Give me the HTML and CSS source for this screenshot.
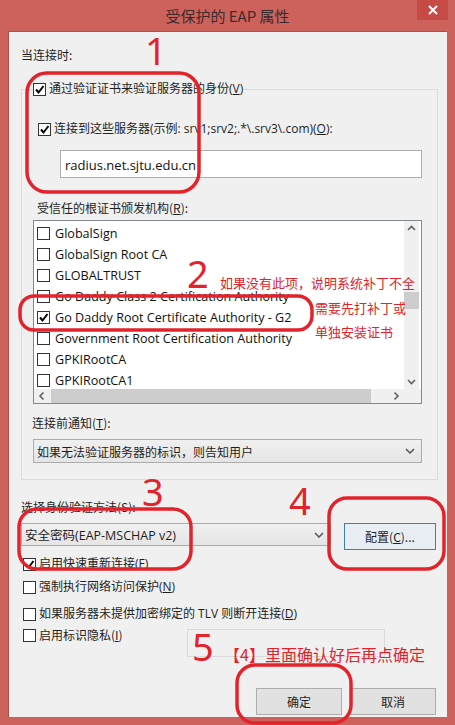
FILE: index.html
```html
<!DOCTYPE html>
<html lang="zh-CN">
<head>
    <meta charset="UTF-8">
    <title>受保护的 EAP 属性</title>
    <link rel="stylesheet" href="styles.css">
</head>
<body>
    <div class="window">
        <div class="titlebar">
            <div class="title">受保护的 EAP 属性</div>
            <div class="close">
                <svg width="10" height="10" viewBox="0 0 10 10"><path d="M1 1L9 9M9 1L1 9" stroke="#fff" stroke-width="2"/></svg>
            </div>
        </div>

        <div class="client">
            <div class="label top-label">当连接时:</div>

            <fieldset class="group">
                <legend class="check">
                    <span class="box on"><svg viewBox="0 0 11 11"><path d="M2 5.5L4.5 8.5L9.5 2" fill="none" stroke="#000" stroke-width="2"/></svg></span>
                    <span>通过验证证书来验证服务器的身份(<u>V</u>)</span>
                </legend>

                <div class="check servers">
                    <span class="box on"><svg viewBox="0 0 11 11"><path d="M2 5.5L4.5 8.5L9.5 2" fill="none" stroke="#000" stroke-width="2"/></svg></span>
                    <span>连接到这些服务器(示例: srv1;srv2;.*\.srv3\.com)(<u>O</u>):</span>
                </div>
                <div class="textbox server-input">radius.net.sjtu.edu.cn</div>

                <div class="label ca-label">受信任的根证书颁发机构(<u>R</u>):</div>
                <div class="listbox">
                    <div class="list-main">
                        <div class="list-items">
                            <div class="item"><span class="box"></span>GlobalSign</div>
                            <div class="item"><span class="box"></span>GlobalSign Root CA</div>
                            <div class="item"><span class="box"></span>GLOBALTRUST</div>
                            <div class="item"><span class="box"></span>Go Daddy Class 2 Certification Authority</div>
                            <div class="item"><span class="box on"><svg viewBox="0 0 11 11"><path d="M2 5.5L4.5 8.5L9.5 2" fill="none" stroke="#000" stroke-width="2"/></svg></span>Go Daddy Root Certificate Authority - G2</div>
                            <div class="item"><span class="box"></span>Government Root Certification Authority</div>
                            <div class="item"><span class="box"></span>GPKIRootCA</div>
                            <div class="item"><span class="box"></span>GPKIRootCA1</div>
                        </div>
                        <div class="vscroll">
                            <svg class="arrow" width="15" height="15" viewBox="0 0 15 15"><path d="M4 9L7.5 5.5L11 9" fill="none" stroke="#606060" stroke-width="1.6"/></svg>
                            <div class="vtrack"><div class="vthumb"></div></div>
                            <svg class="arrow" width="15" height="15" viewBox="0 0 15 15"><path d="M4 6L7.5 9.5L11 6" fill="none" stroke="#606060" stroke-width="1.6"/></svg>
                        </div>
                    </div>
                    <div class="hscroll">
                        <svg class="arrow" width="17" height="14" viewBox="0 0 17 14"><path d="M9.5 3.5L6 7L9.5 10.5" fill="none" stroke="#606060" stroke-width="1.6"/></svg>
                        <div class="htrack"><div class="hthumb"></div></div>
                        <svg class="arrow" width="17" height="14" viewBox="0 0 17 14"><path d="M7.5 3.5L11 7L7.5 10.5" fill="none" stroke="#606060" stroke-width="1.6"/></svg>
                        <div class="corner"></div>
                    </div>
                </div>

                <div class="label notify-label">连接前通知(<u>T</u>):</div>
                <div class="select notify">
                    <span>如果无法验证服务器的标识，则告知用户</span>
                    <svg width="10" height="6" viewBox="0 0 10 6"><path d="M1 1L5 5L9 1" fill="none" stroke="#555" stroke-width="1.5"/></svg>
                </div>
            </fieldset>

            <div class="label method-label">选择身份验证方法(S):</div>
            <div class="method-row">
                <div class="select method">
                    <span>安全密码(EAP-MSCHAP v2)</span>
                    <svg width="10" height="6" viewBox="0 0 10 6"><path d="M1 1L5 5L9 1" fill="none" stroke="#555" stroke-width="1.5"/></svg>
                </div>
                <div class="button config">配置(<u>C</u>)...</div>
            </div>

            <div class="options">
                <div class="check">
                    <span class="box on"><svg viewBox="0 0 11 11"><path d="M2 5.5L4.5 8.5L9.5 2" fill="none" stroke="#000" stroke-width="2"/></svg></span>
                    <span>启用快速重新连接(<u>F</u>)</span>
                </div>
                <div class="check">
                    <span class="box"></span>
                    <span>强制执行网络访问保护(<u>N</u>)</span>
                </div>
                <div class="check">
                    <span class="box"></span>
                    <span>如果服务器未提供加密绑定的 TLV 则断开连接(<u>D</u>)</span>
                </div>
                <div class="check privacy">
                    <span class="box"></span>
                    <span>启用标识隐私(<u>I</u>)</span>
                    <div class="ghost-input"></div>
                </div>
            </div>

            <div class="footer">
                <div class="button">确定</div>
                <div class="button">取消</div>
            </div>
        </div>

        <!-- red marks drawn over the dialog -->
        <div class="marks">
            <svg class="rings" width="455" height="725" viewBox="0 0 455 725">
                <rect x="27" y="73" width="172" height="119" rx="20" />
                <rect x="20" y="296" width="292" height="34" rx="14" />
                <rect x="19" y="509" width="172" height="60" rx="18" />
                <rect x="329" y="498" width="115" height="71" rx="18" />
                <rect x="237" y="665" width="114" height="58" rx="18" />
            </svg>
            <div class="num n1">1</div>
            <div class="num n2">2</div>
            <div class="num n3">3</div>
            <div class="num n4">4</div>
            <div class="num n5">5</div>
            <div class="note note2">
                <div>如果没有此项，说明系统补丁不全</div>
                <div class="indent">需要先打补丁或</div>
                <div class="indent">单独安装证书</div>
            </div>
            <div class="note note5">【4】里面确认好后再点确定</div>
        </div>
    </div>
</body>
</html>
```

FILE: styles.css
```css
* {
    box-sizing: border-box;
    margin: 0;
    padding: 0;
}

body {
    font-family: "Open Sans", "Noto Sans CJK SC", sans-serif;
    font-size: 12px;
    color: #1e1e1e;
    background: #cd625c;
}

.window {
    position: relative;
    width: 455px;
    height: 725px;
    background: #cd625c;
    overflow: hidden;
}

.titlebar {
    display: flex;
    height: 31px;
}

.title {
    flex: 1;
    padding: 5px 0 0 38px;
    text-align: center;
    font-family: "Noto Sans CJK SC", sans-serif;
    font-size: 15px;
    color: #3b2a29;
}

.close {
    display: flex;
    align-items: center;
    justify-content: center;
    width: 31px;
    height: 20px;
    margin-right: 7px;
    background: #c64a46;
}

.client {
    height: 686px;
    margin: 0 8px;
    padding: 15px 0 0 12px;
    background: #f0f0f0;
    border: 1px solid #b04f4a;
    border-width: 1px 0 0 1px;
}

.label {
    font-family: "Noto Sans CJK SC", sans-serif;
    line-height: 16px;
}

.top-label {
    margin-bottom: 18px;
}

u {
    text-decoration: underline;
    text-underline-offset: 1px;
}

.check {
    display: flex;
    align-items: center;
    gap: 3px;
    line-height: 16px;
    font-family: "Noto Sans CJK SC", sans-serif;
}

.check span:last-child {
    font-family: "Open Sans", "Noto Sans CJK SC", sans-serif;
}

.box {
    display: inline-flex;
    width: 13px;
    height: 13px;
    flex-shrink: 0;
    background: #fff;
    border: 1px solid #333;
    padding: 0;
}

.box svg {
    width: 11px;
    height: 11px;
}

.group {
    width: 417px;
    height: 399px;
    border: 1px solid #dcdcdc;
    padding: 0 0 0 11px;
}

.group legend {
    padding: 0 1px;
    margin-left: -1px;
}

.servers {
    margin: 24px 0 0 5px;
}

.textbox {
    width: 362px;
    height: 28px;
    margin: 13px 0 0 27px;
    padding: 5px 4px;
    background: #fff;
    border: 1px solid #abadb3;
    font-size: 13px;
    color: #111;
}

.ca-label {
    margin: 22px 0 0 4px;
}

.listbox {
    width: 389px;
    height: 184px;
    margin-top: 4px;
    border: 1px solid #828790;
    background: #fff;
    display: flex;
    flex-direction: column;
}

.list-main {
    flex: 1;
    display: flex;
    overflow: hidden;
}

.list-items {
    flex: 1;
    overflow: hidden;
    padding-top: 2px;
}

.item {
    display: flex;
    align-items: center;
    gap: 5px;
    height: 21px;
    padding-left: 3px;
    font-size: 12.6px;
    white-space: nowrap;
    color: #111;
}

.vscroll {
    width: 15px;
    display: flex;
    flex-direction: column;
    background: #f0f0f0;
    margin-right: 2px;
}

.vtrack {
    flex: 1;
    padding-top: 56px;
}

.vthumb {
    height: 17px;
    background: #cdcdcd;
}

.hscroll {
    display: flex;
    height: 14px;
    background: #f0f0f0;
}

.htrack {
    flex: 1;
}

.hthumb {
    width: 320px;
    height: 14px;
    background: #cdcdcd;
}

.corner {
    width: 17px;
    background: #f0f0f0;
}

.notify-label {
    margin: 11px 0 0 -1px;
}

.select {
    display: flex;
    align-items: center;
    justify-content: space-between;
    height: 24px;
    padding: 0 6px 0 3px;
    background: linear-gradient(#f0f0f0, #e5e5e5);
    border: 1px solid #acacac;
    font-family: "Noto Sans CJK SC", sans-serif;
}

.notify {
    width: 389px;
    margin-top: 8px;
}

.method-label {
    margin-top: 19px;
}

.method-row {
    display: flex;
    align-items: flex-start;
    gap: 13px;
    margin-top: 8px;
}

.method {
    width: 310px;
    height: 23px;
    font-family: "Open Sans", "Noto Sans CJK SC", sans-serif;
    font-size: 12.5px;
}

.button {
    display: flex;
    align-items: center;
    justify-content: center;
    width: 86px;
    height: 27px;
    background: #e1e1e1;
    border: 1px solid #adadad;
    font-family: "Noto Sans CJK SC", sans-serif;
}

.config {
    width: 92px;
    border-color: #3c7fb1;
    background: #e8eef3;
}

.options {
    display: flex;
    flex-direction: column;
    gap: 7px;
    margin: 6px 0 0 2px;
}

.options .check:nth-child(3) {
    margin-top: 4px;
}

.privacy {
    align-items: flex-start;
    margin-top: -2px;
}

.privacy .box {
    margin-top: 2px;
}

.ghost-input {
    width: 198px;
    height: 28px;
    margin: 2px 0 0 61px;
    border: 1px solid #dadada;
}

.footer {
    display: flex;
    justify-content: flex-end;
    gap: 8px;
    margin: 31px 3px 0 0;
    padding-right: 8px;
}

.marks {
    position: absolute;
    inset: 0;
    pointer-events: none;
    color: #e3232b;
}

.rings {
    position: absolute;
    left: 0;
    top: 0;
}

.rings rect {
    fill: none;
    stroke: #e3232b;
    stroke-width: 3.5;
}

.num {
    position: absolute;
    font-family: "Noto Sans", sans-serif;
    font-size: 38px;
    line-height: 38px;
}

.n1 { left: 145px; top: 31px; }
.n2 { left: 187px; top: 254px; }
.n3 { left: 142px; top: 472px; }
.n4 { left: 289px; top: 481px; }
.n5 { left: 192px; top: 627px; }

.note {
    position: absolute;
    font-family: "Noto Sans CJK SC", sans-serif;
}

.note2 {
    left: 220px;
    top: 271px;
    font-size: 13px;
    line-height: 24.5px;
}

.note2 .indent {
    padding-left: 95px;
}

.note5 {
    left: 224px;
    top: 642px;
    font-size: 16px;
}
```
